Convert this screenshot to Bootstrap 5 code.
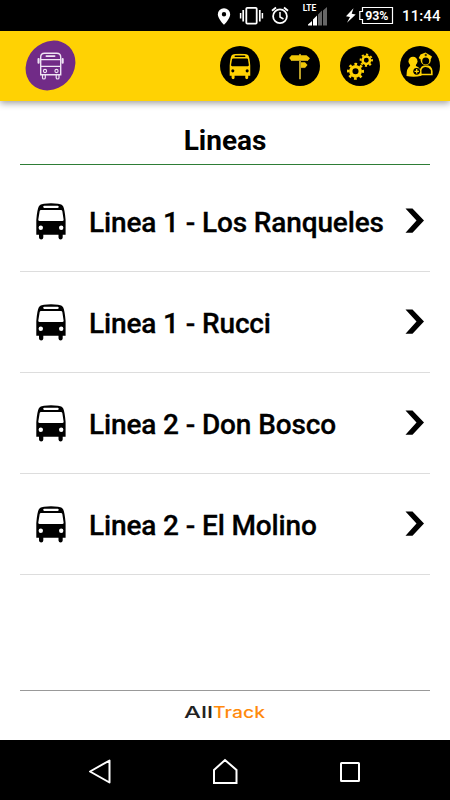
<!DOCTYPE html>
<html lang="es">
<head>
<meta charset="utf-8">
<meta name="viewport" content="width=device-width, initial-scale=1">
<title>Lineas</title>
<link href="https://cdn.jsdelivr.net/npm/bootstrap@5.3.0/dist/css/bootstrap.min.css" rel="stylesheet">
<style>
body{font-family:Roboto,sans-serif;height:800px;overflow:hidden;color:#000;background:#fff}
svg{display:block;flex:none}
.status{height:31px;background:#000;color:#fff;padding-right:10px}
.clock{font-size:15px;font-weight:500;line-height:33px;width:38px;letter-spacing:.1px;white-space:nowrap}
.topbar{height:70px;background:#ffd203;box-shadow:0 2px 7px rgba(0,0,0,.4);padding:0 10px 0 25px}
.tools{gap:20px}
.page-title{height:64px;border-bottom:1px solid #2e7d36;font-size:28px;font-weight:700;line-height:33px;padding-top:23px;margin:0}
.lines{padding-top:6px}
.lines .line-row{height:101px;border-width:0 0 1px!important;border-color:#ddd;border-radius:0;padding:0 5px 0 16px;font-size:28px;font-weight:500;color:#000;letter-spacing:-.13px;-webkit-text-stroke:.3px #000}
.line-row .name{margin-left:23px;white-space:nowrap;padding-top:3px}
.foot{height:50px;border-top:1px solid #999;padding-top:12px}
.sysnav{height:60px;background:#000;padding:3px 89px 0 88px}
.home-key{margin-right:2px}
</style>
<script src="https://cdn.jsdelivr.net/npm/bootstrap@5.3.0/dist/js/bootstrap.bundle.min.js"></script>
</head>
<body class="d-flex flex-column">
<svg width="0" height="0" class="position-absolute">
<defs>
<symbol id="bus" viewBox="0 0 30 37"><path fill-rule="evenodd" d="M3 3Q4 1.300 8 .8Q15-.3 22 .8Q26 1.300 27 3Q28.700 6 29.600 17V31.700H26.700V34.500Q26.500 36.500 24.600 36.500T22.500 34.500V31.700H7.300V34.500Q7.200 36.500 5.200 36.500T3 34.500V31.700H.3V17Q1.200 6 3 3ZM8.300 2.700Q7.200 2.700 7.200 3.800T8.300 5H21.500Q22.700 5 22.700 3.800T21.500 2.700ZM5 7Q4 7 3.700 8.100L2.300 16.500Q2.200 18 3.700 18H26.300Q27.700 18 27.600 16.500L26.300 8.100Q26 7 25 7ZM4.800 22.500a2.200 2.200 0 1 0 0 4.400a2.200 2.200 0 1 0 0-4.400ZM25.200 22.500a2.200 2.200 0 1 0 0 4.400a2.200 2.200 0 1 0 0-4.400Z"/></symbol>
<symbol id="chev" viewBox="0 0 20 26"><path d="M.5.500H7.500L19 12.500L7.500 24.700H.5L11.500 12.500Z"/></symbol>
</defs>
</svg>
<div class="status d-flex justify-content-end">
<svg width="184" height="31" viewBox="214 0 184 31" fill="none" stroke="#fff">
<path fill="#fff" stroke="none" fill-rule="evenodd" d="M224 8.200a6.200 6.200 0 0 0-6.200 6.200C217.800 18.500 224 24.800 224 24.800S230.200 18.500 230.200 14.400A6.200 6.200 0 0 0 224 8.200ZM224 12a2.200 2.200 0 1 1 0 4.400a2.200 2.200 0 1 1 0-4.400Z"/>
<rect x="246.300" y="7.800" width="10.400" height="15.800" rx="1" stroke-width="1.800"/>
<path d="M243.200 10v11.500M259.800 10v11.500" stroke-width="1.700"/><path d="M240.600 13v5.500M262.400 13v5.500" stroke-width="1.500"/>
<circle cx="280" cy="16.300" r="6.900" stroke-width="1.800"/><path d="M280 12v5l3.500 2" stroke-width="1.500"/><path d="M272 10.800l4-3.300M288 10.800l-4-3.300" stroke-width="1.800"/>
<text x="302.700" y="11" fill="#fff" stroke="none" font-size="8.500" font-weight="700" textLength="13.500" lengthAdjust="spacingAndGlyphs">LTE</text>
<path d="M308 25.500v-1l4-3.500v4.500zM313 25.500v-6l4-4v10z" fill="#fff" stroke="none"/><path d="M318 25.500v-11l4-4v15zM323 25.500v-15l4-3.500v18.500z" fill="#666" stroke="none"/>
<path fill="#fff" stroke="none" d="M353.500 8.200L346 16.200l4 .8-3 5.800 8.700-8.300-4-.8z"/>
<path d="M362.500 7.500H392.500V23.500H362.500V19.500H359.800V11.500H362.500Z" stroke-width="1.200"/>
<text x="365.200" y="19.800" fill="#fff" stroke="none" font-size="12" font-weight="700" textLength="23.300" lengthAdjust="spacingAndGlyphs">93%</text>
</svg>
<div class="clock ms-1">11:44</div>
</div>
<header class="topbar d-flex align-items-center justify-content-between">
<svg width="52" height="52" viewBox="25 39 52 52" fill="none" stroke="#eee4f3">
<ellipse cx="50.500" cy="64.500" rx="26.500" ry="23.200" transform="rotate(-45 50.500 64.500)" fill="#712b87" stroke="none"/>
<path d="M40.700 73.800V56Q40.700 52.200 44.500 52.200H56.700Q60.700 52.200 60.700 56V73.800Z" stroke-width="1.400"/>
<path d="M41 58.600H60.500M41 65.300H60.500" stroke-width="1.200"/>
<rect x="45.500" y="54.200" width="10" height="1.800" rx=".9" fill="#eee4f3" stroke="none"/>
<rect x="37.500" y="57" width="2.100" height="5.800" rx="1" fill="#eee4f3" stroke="none"/><rect x="61.600" y="57" width="2.100" height="5.800" rx="1" fill="#eee4f3" stroke="none"/>
<circle cx="45" cy="70" r="1.600" stroke-width="1.100"/><circle cx="56.500" cy="70" r="1.600" stroke-width="1.100"/>
<path d="M42.500 74v2.700q0 1.300 1.400 1.300t1.400-1.300v-2.700M56.200 74v2.700q0 1.300 1.400 1.300t1.400-1.300v-2.700" stroke-width="1.200"/>
</svg>
<nav class="tools d-flex">
<svg width="40" height="40"><circle cx="20" cy="20" r="20"/><use href="#bus" x="9" y="7.500" width="22" height="26" fill="#ffd203"/></svg>
<svg width="40" height="40" fill="#f1c706"><circle cx="20" cy="20" r="20" fill="#000"/><path d="M19 8.200q1-.8 2 0V33.200H19Z" fill="#b89d28"/><path d="M11.500 9.200H26.500L30 12.200 27.500 15H11.500L9.200 12Z"/><path d="M21 16.300H25L27.500 19 25 22H21Z"/><path d="M12 14.500H27M21 21.600H25" stroke="#a98e21" stroke-width=".7"/></svg>
<svg width="40" height="40"><circle cx="20" cy="20" r="20"/>
<g fill="none" stroke="#ffd203"><circle cx="15.500" cy="25.300" r="4.700" stroke-width="3.300"/><circle cx="15.500" cy="25.300" r="7.200" stroke-width="2.600" stroke-dasharray="2.600 3.055" transform="rotate(-10 15.500 25.300)"/><circle cx="26.300" cy="14.200" r="3.700" stroke-width="2.500"/><circle cx="26.300" cy="14.200" r="5.700" stroke-width="1.900" stroke-dasharray="2.150 2.327" transform="rotate(-10 26.300 14.200)"/></g></svg>
<svg width="40" height="40"><circle cx="20" cy="20" r="20"/>
<g fill="#ffd203"><path d="M18.700 12L20.500 8.500 25.500 6.500 32 10.500 30.700 13.500H20.500Z"/><circle cx="25.700" cy="14.200" r="5"/><path d="M20 23Q21.500 19.700 24 19.500H28.500Q33.300 20.500 32.700 29.300H20Z"/><circle cx="25.700" cy="14.900" r="3.500" fill="#000"/><path d="M21.500 27.800V24Q22.500 21 25.700 21T30.800 24L31 27.800Z" fill="#000"/><path d="M24.500 9h2.600M25.800 7.800v2.400" stroke="#000" stroke-width=".8"/>
<circle cx="13" cy="15.200" r="4.500"/><path d="M10.500 17H15.500L16 20Q21.500 22 21.500 29.800Q14 31.500 6.500 30Q6.500 22 10 20Z"/></g><circle cx="16.700" cy="25.300" r="3.400" fill="#000"/><path d="M14.500 25.300h4.400M16.700 23.100v4.400" stroke="#ffd203" stroke-width="1.300"/></svg>
</nav>
</header>
<main class="flex-grow-1 d-flex flex-column px-0 mx-3">
<div class="px-1 d-flex flex-column flex-grow-1">
<h1 class="page-title text-center">Lineas</h1>
<div class="lines list-group list-group-flush">
<a href="#" class="line-row list-group-item d-flex align-items-center"><svg width="30" height="37"><use href="#bus"/></svg><span class="name">Linea 1 - Los Ranqueles</span><svg class="ms-auto" width="20" height="26"><use href="#chev"/></svg></a>
<a href="#" class="line-row list-group-item d-flex align-items-center"><svg width="30" height="37"><use href="#bus"/></svg><span class="name">Linea 1 - Rucci</span><svg class="ms-auto" width="20" height="26"><use href="#chev"/></svg></a>
<a href="#" class="line-row list-group-item d-flex align-items-center"><svg width="30" height="37"><use href="#bus"/></svg><span class="name">Linea 2 - Don Bosco</span><svg class="ms-auto" width="20" height="26"><use href="#chev"/></svg></a>
<a href="#" class="line-row list-group-item d-flex align-items-center"><svg width="30" height="37"><use href="#bus"/></svg><span class="name">Linea 2 - El Molino</span><svg class="ms-auto" width="20" height="26"><use href="#chev"/></svg></a>
</div>
<footer class="foot mt-auto d-flex justify-content-center align-items-start">
<svg width="82" height="18" font-family="Inter, sans-serif" font-weight="500" font-size="16"><text x="0" y="14.500" fill="#222" textLength="29" lengthAdjust="spacingAndGlyphs">All</text><text x="29" y="14.500" fill="#ff8a0c" textLength="52" lengthAdjust="spacingAndGlyphs">Track</text></svg>
</footer>
</div>
</main>
<div class="sysnav d-flex justify-content-between align-items-center">
<svg width="24" height="26" fill="none" stroke="#fff" stroke-width="2" stroke-linejoin="round"><path d="M2 12.500L21.500 1.500V23.500Z"/></svg>
<svg class="home-key" width="26" height="28" fill="none" stroke="#fff" stroke-width="2"><path d="M2 12L13 2 24.500 12V25H2Z"/></svg>
<svg width="22" height="22" fill="none" stroke="#fff" stroke-width="2"><rect x="2" y="2" width="18" height="18" rx=".5"/></svg>
</div>
</body>
</html>
